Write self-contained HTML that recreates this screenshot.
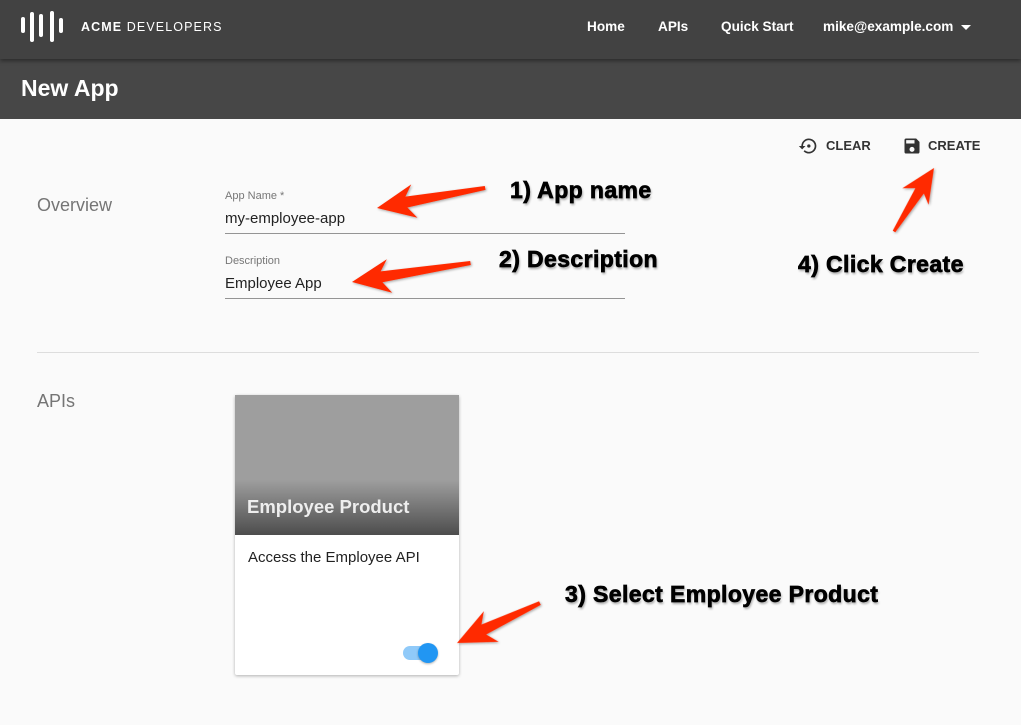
<!DOCTYPE html>
<html><head><meta charset="utf-8"><style>
*{margin:0;padding:0;box-sizing:border-box}
body{width:1021px;height:725px;background:#fafafa;font-family:"Liberation Sans",sans-serif;position:relative;overflow:hidden}
.top{position:absolute;left:0;top:0;width:1021px;height:59px;background:#424242;box-shadow:0 2px 4px rgba(0,0,0,.4);z-index:2}
.bar{position:absolute;left:0;top:59px;width:1021px;height:60px;background:#474747}
.a{position:absolute}
.nav{color:#fff;font-weight:bold;font-size:13.6px;top:19px}
.lbl{color:#757575;font-size:18px}
.ann{font-weight:bold;font-size:23px;letter-spacing:.4px;color:#000;-webkit-text-stroke:.7px #000;text-shadow:1px 2px 2px rgba(0,0,0,.35),0 0 3px #fff}
.lb{position:absolute;width:4px;background:#fff;border-radius:2px}
</style></head><body>
<div class="top">
 <div class="lb" style="left:21px;top:17px;height:16px"></div>
 <div class="lb" style="left:30px;top:12px;height:30px"></div>
 <div class="lb" style="left:39px;top:14px;height:23px"></div>
 <div class="lb" style="left:50px;top:11px;height:31px"></div>
 <div class="lb" style="left:59px;top:18px;height:15px"></div>
 <div class="a" style="left:81px;top:20px;color:#fff;font-size:12.5px;letter-spacing:1.1px"><b>ACME</b> DEVELOPERS</div>
 <div class="a nav" style="left:587px">Home</div>
 <div class="a nav" style="left:658px">APIs</div>
 <div class="a nav" style="left:721px">Quick Start</div>
 <div class="a nav" style="left:823px">mike@example.com</div>
 <div class="a" style="left:961px;top:25px;border-left:5px solid transparent;border-right:5px solid transparent;border-top:5px solid #fff"></div>
</div>
<div class="bar"><div class="a" style="left:21px;top:16px;color:#fff;font-size:23px;font-weight:bold">New App</div></div>

<svg class="a" style="left:798px;top:136px" width="20" height="20" viewBox="0 0 24 24"><path fill="#333" d="M13 3a9 9 0 0 0-9 9H1l4 4 4-4H6a7 7 0 1 1 2.1 5l-1.4 1.4A9 9 0 1 0 13 3zm0 7a2 2 0 1 0 0 4 2 2 0 0 0 0-4z"/></svg>
<div class="a" style="left:826px;top:138px;font-size:13px;font-weight:bold;color:#333">CLEAR</div>
<svg class="a" style="left:902px;top:136px" width="20" height="20" viewBox="0 0 24 24"><path fill="#333" d="M17 3H5a2 2 0 0 0-2 2v14a2 2 0 0 0 2 2h14a2 2 0 0 0 2-2V7l-4-4zm-5 16a3 3 0 1 1 0-6 3 3 0 0 1 0 6zm3-10H5V5h10v4z"/></svg>
<div class="a" style="left:928px;top:138px;font-size:13px;font-weight:bold;color:#333">CREATE</div>

<div class="a lbl" style="left:37px;top:195px">Overview</div>
<div class="a" style="left:225px;top:190px;font-size:11px;color:#777">App Name *</div>
<div class="a" style="left:225px;top:210px;font-size:15px;color:#222">my-employee-app</div>
<div class="a" style="left:225px;top:233px;width:400px;height:1px;background:#949494"></div>
<div class="a" style="left:225px;top:255px;font-size:11px;color:#777">Description</div>
<div class="a" style="left:225px;top:275px;font-size:15px;color:#222">Employee App</div>
<div class="a" style="left:225px;top:298px;width:400px;height:1px;background:#949494"></div>
<div class="a" style="left:37px;top:352px;width:942px;height:1px;background:#ddd"></div>
<div class="a lbl" style="left:37px;top:391px">APIs</div>

<div class="a" style="left:235px;top:395px;width:224px;height:280px;background:#fff;border-radius:2px;box-shadow:0 1px 3px rgba(0,0,0,.3)">
 <div style="height:140px;background:linear-gradient(#9e9e9e 0,#9e9e9e 85px,#4d4d4d 140px);position:relative">
  <div class="a" style="left:12px;top:101px;color:#eee;font-size:18.5px;font-weight:bold">Employee Product</div>
 </div>
 <div class="a" style="left:13px;top:154px;font-size:15px;color:#222">Access the Employee API</div>
 <div class="a" style="left:168px;top:251px;width:30px;height:14px;border-radius:7px;background:#90caf9"></div>
 <div class="a" style="left:183px;top:248px;width:20px;height:20px;border-radius:50%;background:#2196f3;box-shadow:0 1px 2px rgba(0,0,0,.3)"></div>
</div>

<svg class="a" style="left:0;top:0" width="1021" height="725">
 <defs><filter id="s"><feDropShadow dx="1" dy="1" stdDeviation="1.2" flood-opacity=".35"/></filter></defs>
 <g fill="#ff2a00" filter="url(#s)">
  <polygon transform="translate(377,208) rotate(169.5)" points="0,0 -38,-17 -30,-5 -110,-2 -110,2 -30,6 -38,17"/>
  <polygon transform="translate(352,282) rotate(170.9)" points="0,0 -38,-17 -30,-5 -120,-2 -120,2 -30,6 -38,17"/>
  <polygon transform="translate(457,643) rotate(154.3)" points="0,0 -38,-17 -30,-5 -92,-2 -92,2 -30,6 -38,17"/>
  <polygon transform="translate(934,168) rotate(-57.8)" points="0,0 -34,-16 -27,-5 -75,-1.5 -75,1.5 -27,5 -34,15"/>
 </g>
</svg>
<div class="a ann" style="left:510px;top:177px">1) App name</div>
<div class="a ann" style="left:499px;top:246px">2) Description</div>
<div class="a ann" style="left:798px;top:251px">4) Click Create</div>
<div class="a ann" style="left:565px;top:581px">3) Select Employee Product</div>
</body></html>
